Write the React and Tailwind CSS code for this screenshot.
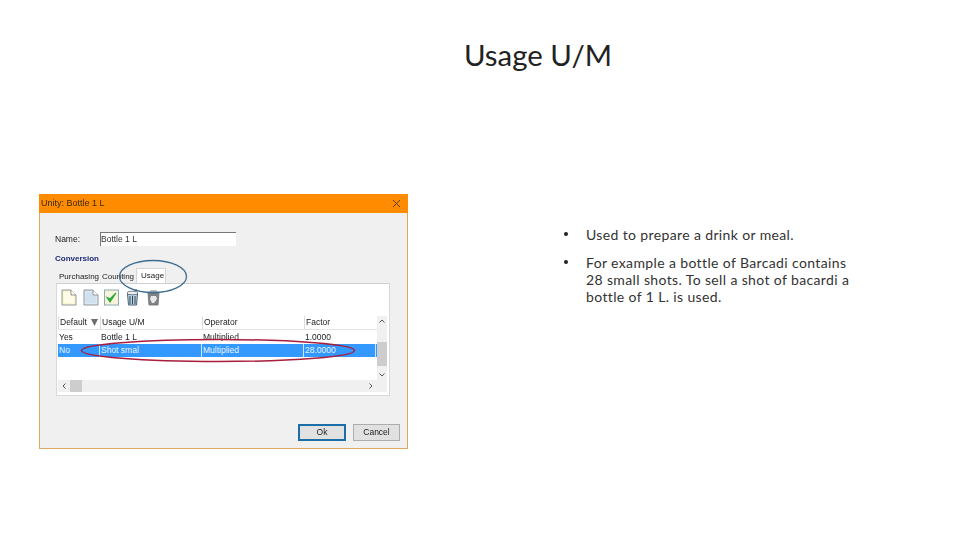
import React from 'react';

const DocIcon = ({ frame }) => (
  <svg width="16" height="17" viewBox="0 0 16 17">
    <path d="M1 1h9l5 5v10H1z" fill={frame ? '#dce9f3' : '#fbf6cf'} stroke="#7a7d80" strokeWidth="0.8" />
    <path d="M3 3h6v4h4v7H3z" fill={frame ? '#cfe1ef' : '#fffde8'} />
    <path d="M10 1v5h5" fill="#fff" stroke="#7a7d80" strokeWidth="0.8" />
  </svg>
);

const CheckIcon = () => (
  <svg width="15" height="17" viewBox="0 0 15 17">
    <rect x="0.5" y="1" width="14" height="15" fill="#f7f4dc" stroke="#8fa8b8" />
    <path d="M3 8.5l3 4.5 6-9-6 5.8z" fill="#2fa83a" stroke="#2fa83a" strokeWidth="1.1" />
  </svg>
);

const TrashIcon = () => (
  <svg width="13" height="17" viewBox="0 0 13 17">
    <path d="M1.5 5h10l-1 11h-8z" fill="#b9d4e4" stroke="#3d5362" strokeWidth="0.9" />
    <path d="M4 7v8M6.5 7v8M9 7v8" stroke="#2f4553" strokeWidth="1" />
    <ellipse cx="6.5" cy="4" rx="5.5" ry="1.8" fill="#e6eef2" stroke="#5a6a74" strokeWidth="0.8" />
    <path d="M8 2l3-2" stroke="#8a979e" strokeWidth="1" />
  </svg>
);

const RecycleIcon = () => (
  <svg width="13" height="17" viewBox="0 0 13 17">
    <path d="M1 4h11l-1 12H2z" fill="#7d8386" stroke="#6a7073" strokeWidth="0.8" />
    <path d="M4 1h5l3 3H1z" fill="#b4b8ba" />
    <path d="M4 7h5l1 3-3 4H5L3 10z" fill="#e8e8e8" />
  </svg>
);

const Cell = ({ children, className = '' }) => (
  <div className={`pl-[1px] truncate ${className}`}>{children}</div>
);

const Dialog = () => (
  <div className="relative w-[369px] h-[255px] shrink-0 flex flex-col border border-[#dfa860] bg-[#f0f0f0] text-[#1c1c1c] text-[8.5px] leading-none font-['Liberation_Sans',sans-serif]">
    <div className="h-[19px] -mx-px -mt-px bg-[#ff8c00] flex items-center justify-between pl-[2px] pr-[7px] text-[9px] text-[#3a2a10] blur-[0.3px]">
      <span>Unity: Bottle 1 L</span>
      <svg width="9" height="9" viewBox="0 0 9 9"><path d="M1 1l7 7M8 1l-7 7" stroke="#5a4020" strokeWidth="1" /></svg>
    </div>

    <div className="flex items-center pl-[15px] mt-[19px] h-[14px] blur-[0.3px]">
      <span className="w-[45px]">Name:</span>
      <div className="w-[136px] h-[14px] bg-white border-t border-l border-[#777] flex items-center text-[#333]">Bottle 1 L</div>
    </div>

    <div className="pl-[15px] mt-[7px] h-[12px] flex items-center font-bold text-[8px] text-[#1c2a78] blur-[0.3px]">Conversion</div>

    <div className="flex items-end pl-[19px] mt-[3px] h-[15px] text-[8px] blur-[0.3px]">
      <span className="w-[43px] mb-[2px]">Purchasing</span>
      <span className="w-[34px] mb-[2px]">Counting</span>
      <span className="w-[30px] h-[15px] bg-white border border-b-0 border-[#d5d5d5] flex items-center pl-[4px]">Usage</span>
    </div>

    <div className="ml-[16px] w-[334px] h-[113px] bg-white border border-[#d9d9d9] border-t-[#d0d0d0] flex flex-col pl-[1px] pr-[2px] pb-[3px]">
      <div className="flex items-center pl-[3px] mt-[5px] h-[17px]">
        <DocIcon />
        <span className="ml-[6px]"><DocIcon frame /></span>
        <span className="ml-[5px]"><CheckIcon /></span>
        <span className="ml-[7px]"><TrashIcon /></span>
        <span className="ml-[8px]"><RecycleIcon /></span>
      </div>

      <div className="flex flex-1 mt-[10px] min-h-0">
        <div className="flex-1 flex flex-col">
          <div className="grid grid-cols-[42px_102px_102px_72px] h-[14px] items-center border-b border-[#e4e4e4] blur-[0.3px] [&>div]:border-l [&>div]:border-[#dcdcdc] [&>div]:h-full [&>div]:flex [&>div]:items-center">
            <Cell className="justify-between pr-[2px]">
              Default
              <svg width="7" height="7" viewBox="0 0 7 7"><path d="M0 0h7L3.5 7z" fill="#6d6d6d" /></svg>
            </Cell>
            <Cell>Usage U/M</Cell>
            <Cell>Operator</Cell>
            <Cell>Factor</Cell>
          </div>
          <div className="grid grid-cols-[42px_102px_102px_72px] h-[14px] items-center blur-[0.3px]">
            <Cell>Yes</Cell>
            <Cell>Bottle 1 L</Cell>
            <Cell>Multiplied</Cell>
            <Cell>1.0000</Cell>
          </div>
          <div className="grid grid-cols-[42px_102px_102px_72px] h-[13px] items-center bg-[#3399ff] text-[#e8f4ff] [&>div]:border-r [&>div]:border-[#cfe6ff] [&>div]:h-full [&>div]:flex [&>div]:items-center">
            <Cell>No</Cell>
            <Cell>Shot smal</Cell>
            <Cell>Multiplied</Cell>
            <Cell className="border-r-0">28.0000</Cell>
          </div>
          <div className="flex-1" />
          <div className="h-[12px] bg-[#f0f0f0] flex items-center justify-between px-[4px] relative">
            <svg width="4" height="6" viewBox="0 0 4 6"><path d="M3.5 0.5L1 3l2.5 2.5" fill="none" stroke="#555" /></svg>
            <svg width="4" height="6" viewBox="0 0 4 6"><path d="M0.5 0.5L3 3 0.5 5.5" fill="none" stroke="#555" /></svg>
            <div className="absolute left-[12px] top-0 w-[12px] h-full bg-[#cdcdcd]" />
          </div>
        </div>
        <div className="w-[10px] bg-[#f0f0f0] flex flex-col items-center justify-between py-[3px] relative h-full">
          <svg width="6" height="4" viewBox="0 0 6 4"><path d="M0.5 3.5L3 1l2.5 2.5" fill="none" stroke="#555" /></svg>
          <div className="absolute left-0 top-[26px] w-full h-[24px] bg-[#cdcdcd]" />
          <svg className="mb-[12px]" width="6" height="4" viewBox="0 0 6 4"><path d="M0.5 0.5L3 3l2.5-2.5" fill="none" stroke="#555" /></svg>
        </div>
      </div>
    </div>

    <div className="flex justify-end gap-[7px] pr-[7px] mt-[28px] blur-[0.3px]">
      <div className="w-[48px] h-[17px] bg-[#e1e1e1] border-2 border-[#1b6ea8] flex items-center justify-center">Ok</div>
      <div className="w-[47px] h-[17px] bg-[#e1e1e1] border border-[#adadad] flex items-center justify-center">Cancel</div>
    </div>

    <svg className="absolute left-[78px] top-[64px] pointer-events-none" width="70" height="35" viewBox="0 0 70 35">
      <ellipse cx="35" cy="17.5" rx="33.5" ry="16" fill="none" stroke="#3f6d90" strokeWidth="1.3" />
    </svg>
    <svg className="absolute left-[40px] top-[143px] pointer-events-none" width="276" height="25" viewBox="0 0 276 25">
      <ellipse cx="138" cy="12.5" rx="136.5" ry="11" fill="none" stroke="#a81c3c" strokeWidth="1.5" />
    </svg>
  </div>
);

export default function App() {
  return (
    <div className="w-[960px] h-[540px] bg-white overflow-hidden flex flex-col font-['Lato','Liberation_Sans',sans-serif] text-[#222]">
      <h1 className="ml-[116px] mt-[36px] h-[38px] text-center text-[29.4px] leading-[38px] font-normal">Usage U/M</h1>

      <div className="flex items-start ml-[39px] mt-[120px]">
        <Dialog />
        <ul className="ml-[156px] mt-[32px] w-[291px] flex flex-col gap-[11px] text-[14px] leading-[17px] tracking-[0.37px] text-[#333]">
          <li className="flex">
            <span className="w-[22px] shrink-0"><span className="block w-[4px] h-[4px] mt-[6px] rounded-full bg-[#222]" /></span>
            <span>Used to prepare a drink or meal.</span>
          </li>
          <li className="flex">
            <span className="w-[22px] shrink-0"><span className="block w-[4px] h-[4px] mt-[6px] rounded-full bg-[#222]" /></span>
            <span>For example a bottle of Barcadi contains 28 small shots. To sell a shot of bacardi a bottle of 1 L. is used.</span>
          </li>
        </ul>
      </div>
    </div>
  );
}
